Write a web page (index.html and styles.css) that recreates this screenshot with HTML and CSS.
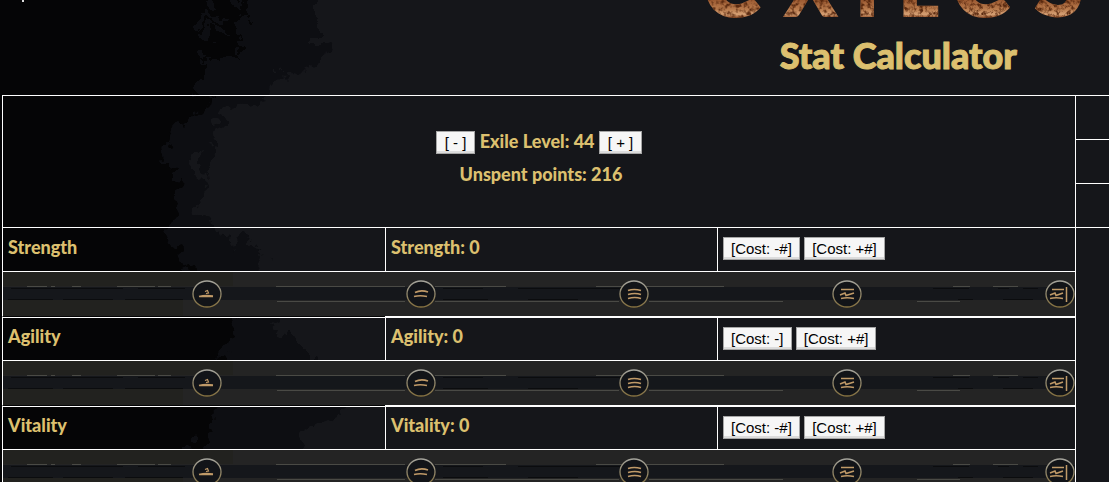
FILE: index.html
```html
<!DOCTYPE html>
<html lang="en">
<head>
<meta charset="utf-8">
<title>Stat Calculator</title>
<link rel="stylesheet" href="styles.css">
</head>
<body>
<svg class="backdrop" width="400" height="482" viewBox="0 0 400 482" aria-hidden="true">
  <defs>
    <filter id="rough" x="-10%" y="-10%" width="120%" height="120%" color-interpolation-filters="sRGB">
      <feTurbulence type="fractalNoise" baseFrequency="0.05" numOctaves="4" seed="7"/>
      <feDisplacementMap in="SourceGraphic" scale="44" xChannelSelector="R" yChannelSelector="G"/>
    </filter>
  </defs>
  <g filter="url(#rough)">
    <path fill="#0d0e12" d="M-40-40H318V50L325 62L280 72L278 96L222 114L208 145L198 170L205 222L240 235L290 300L275 330L340 380L350 410L300 440L260 520H-40Z"/>
    <path fill="#050506" d="M-40-40H240V60H200V84L205 100L170 132L160 160L178 182L172 220L180 270L238 318L228 350L210 380L215 430L190 450V520H-40Z"/>
    <path fill="#0d0e12" d="M190 20h38v5h-38zM196 30h30v8h-30zM205 0h10v14h-10z"/>
  </g>
  <path fill="#050506" d="M0 0H140V482H0Z"/>
  <path fill="#ddd" d="M22 0h2v2h-2z"/>
</svg>

<svg class="symbols" width="0" height="0" aria-hidden="true">
  <defs>
    <linearGradient id="ring" x1="0" y1="0" x2="0" y2="1">
      <stop offset="0" stop-color="#a5a49c"/><stop offset="1" stop-color="#84703f"/>
    </linearGradient>
    <symbol id="track" viewBox="0 0 1072 44">
      <path fill="#242424" d="M0 0H1072V44H0Z"/>
      <path fill="#22221f" d="M0 0H230V14H0ZM0 28H180V44H0Z"/>
      <path fill="#15171b" d="M0 15H1072V28H0Z"/>
      <path stroke="#0b0c0e" stroke-width="1" fill="none" d="M8 16.500H120M135 16.500H182M440 16.500H480M515 16.500H645M930 16.500H966M995 16.500H1006M1020 16.500H1035M5 27.500H50M60 27.500H110M122 27.500H180M440 27.500H485M525 27.500H575M955 27.500H970M1000 27.500H1030"/>
      <path stroke="#4a4a45" fill="none" d="M24 14.500H44M48 14.500H52M69 14.500H78M114 14.500H152M155 14.500H168M273 14.500H402M432 14.500H503M593 14.500H721M950 14.500H967M990 14.500H1015M274 29.500H402M432 29.500H616M646 29.500H780M914 29.500H957"/>
      <g fill="#121418" stroke="url(#ring)" stroke-width="1.300">
        <ellipse cx="204" cy="22" rx="14" ry="13"/><ellipse cx="418" cy="22" rx="14" ry="13"/><ellipse cx="631" cy="22" rx="14" ry="13"/><ellipse cx="844" cy="22" rx="14" ry="13"/><ellipse cx="1057" cy="22" rx="14" ry="13"/>
      </g>
      <g fill="none" stroke="#c09a68" stroke-width="1.700">
        <path d="M196 24.500Q202 23 210 24M198 24.500H210"/>
        <path stroke-width="1.200" d="M202 19.500L204.500 18.500L205.500 21L203 21.500"/>
        <path d="M412 20.500Q418 17.500 425 20M411 24.500Q417 23 424 24.500"/>
        <path d="M625 18.500Q631 16.500 638 18.500M625 22.500Q632 20.500 638 22.500M625 26.500Q632 24.500 638 26.500"/>
        <path stroke-width="1.500" d="M838 17.500H851M837 23L842 21L843 23.500L851 21M838 26.500Q844 25 851 26.500"/>
        <path stroke-width="1.500" d="M1049 17.500H1061M1047 23L1052 21L1053 23.500L1060 21M1047 26.500Q1053 25 1060 26.500M1063.500 15V30"/>
      </g>
    </symbol>
  </defs>
</svg>

<header class="masthead">
  <svg class="logo" viewBox="0 0 422 24" role="img" aria-label="Exiles">
    <defs>
      <linearGradient id="bronze" gradientUnits="userSpaceOnUse" x1="0" y1="0" x2="0" y2="18">
        <stop offset="0" stop-color="#9c5a32"/><stop offset="0.500" stop-color="#b87a4c"/><stop offset="0.800" stop-color="#d6a074"/><stop offset="1" stop-color="#8b4a24"/>
      </linearGradient>
      <filter id="grain" x="-5%" y="-5%" width="110%" height="110%" color-interpolation-filters="sRGB">
        <feTurbulence type="fractalNoise" baseFrequency="0.250" numOctaves="3" seed="3"/>
        <feColorMatrix values="0 0 0 0 0.350  0 0 0 0 0.160  0 0 0 0 0.060  3 0 0 0 -1.300"/>
        <feComposite in2="SourceGraphic" operator="in" result="spots"/>
        <feMerge><feMergeNode in="SourceGraphic"/><feMergeNode in="spots"/></feMerge>
      </filter>
    </defs>
    <g class="logo-text" filter="url(#grain)">
      <text class="logo-round" x="15" y="16">e</text>
      <text x="97" y="16">X</text>
      <text x="168" y="16">I</text>
      <text x="211" y="16">L</text>
      <text class="logo-round" x="265" y="16">e</text>
      <text class="logo-last" x="347" y="16">S</text>
    </g>
  </svg>
  <h1 class="title">Stat Calculator</h1>
</header>

<main class="sheet">
  <table class="stats">
    <colgroup><col class="col-name"><col class="col-value"><col></colgroup>
    <tbody>
      <tr class="summary"><td colspan="3">
        <p class="line"><button type="button">[ - ]</button> Exile Level: 44 <button type="button">[ + ]</button></p>
        <p class="line points">Unspent points: 216</p>
      </td></tr>
      <tr class="stat"><th scope="row">Strength</th><td>Strength: 0</td><td><button type="button">[Cost: -#]</button> <button type="button">[Cost: +#]</button></td></tr>
      <tr class="bar"><td colspan="3"><svg class="track" viewBox="0 0 1072 44" aria-hidden="true"><use href="#track"/></svg></td></tr>
      <tr class="stat"><th scope="row">Agility</th><td>Agility: 0</td><td><button type="button">[Cost: -]</button> <button type="button">[Cost: +#]</button></td></tr>
      <tr class="bar"><td colspan="3"><svg class="track" viewBox="0 0 1072 44" aria-hidden="true"><use href="#track"/></svg></td></tr>
      <tr class="stat"><th scope="row">Vitality</th><td>Vitality: 0</td><td><button type="button">[Cost: -#]</button> <button type="button">[Cost: +#]</button></td></tr>
      <tr class="bar"><td colspan="3"><svg class="track" viewBox="0 0 1072 44" aria-hidden="true"><use href="#track"/></svg></td></tr>
    </tbody>
  </table>
  <table class="side">
    <tbody><tr><td></td></tr><tr><td></td></tr><tr><td></td></tr></tbody>
  </table>
</main>
</body>
</html>
```
FILE: styles.css
```css
html {
  overflow: hidden;
  background: #15161a;
}
body {
  margin: 0;
  color: #dcc06f;
  font: 900 18px/24px Lato, sans-serif;
}
.backdrop {
  position: absolute;
  top: 0;
  left: 0;
  z-index: -1;
}
.symbols {
  position: absolute;
}
.masthead {
  width: 38%;
  height: 95px;
  margin-left: auto;
  text-align: center;
}
.logo {
  display: block;
  width: 100%;
  overflow: hidden;
}
.logo-text {
  fill: url(#bronze);
  stroke: url(#bronze);
  stroke-width: 2px;
  font-size: 76px;
}
.logo-round {
  font-size: 112px;
}
.logo-last {
  font-size: 88px;
}
.title {
  margin: 9px 0 0;
  font-size: 36px;
  line-height: 44px;
  font-weight: 900;
  -webkit-text-stroke: 1px #dcc06f;
}
.sheet {
  display: flex;
  align-items: flex-start;
  padding-left: 2px;
}
table {
  border-collapse: separate;
  border-spacing: 0;
  table-layout: fixed;
}
th,
td {
  box-sizing: border-box;
  padding: 0;
  border-top: 1px solid #fff;
  text-align: left;
  font-weight: 900;
}
.stats {
  flex: 1;
  width: 100%;
  border-right: 1px solid #fff;
}
.stats th,
.stats td {
  border-left: 1px solid #fff;
}
.col-name {
  width: 383px;
}
.col-value {
  width: 332px;
}
.summary td {
  height: 132px;
  padding-bottom: 8px;
  text-align: center;
}
.line {
  margin: 0 0 8px;
}
.points {
  margin: 0;
  padding-left: 4px;
}
.stat th,
.stat td {
  height: 44px;
  padding: 0 5px 6px;
  vertical-align: middle;
}
.stat td:last-child {
  padding-bottom: 4px;
}
.bar + .stat th {
  border-top-color: #050506;
  box-shadow: inset 0 1px #fff;
}
.bar + .stat td {
  border-top-width: 2px;
}
.track {
  display: block;
  width: 100%;
}
.side {
  width: 33px;
}
.side td {
  height: 44px;
}
.side tr:last-child td {
  height: 45px;
  border-bottom: 1px solid #fff;
}
button {
  height: 23px;
  padding: 0 7px;
  border: 1px solid #a6a6a6;
  border-radius: 0;
  background: #f6f6f6;
  box-shadow: inset 0 -2px #dcdcdc;
  color: #000;
  font: 15px/19px "Liberation Sans", Arial, sans-serif;
}
.summary button {
  padding: 0 8px;
}
```
